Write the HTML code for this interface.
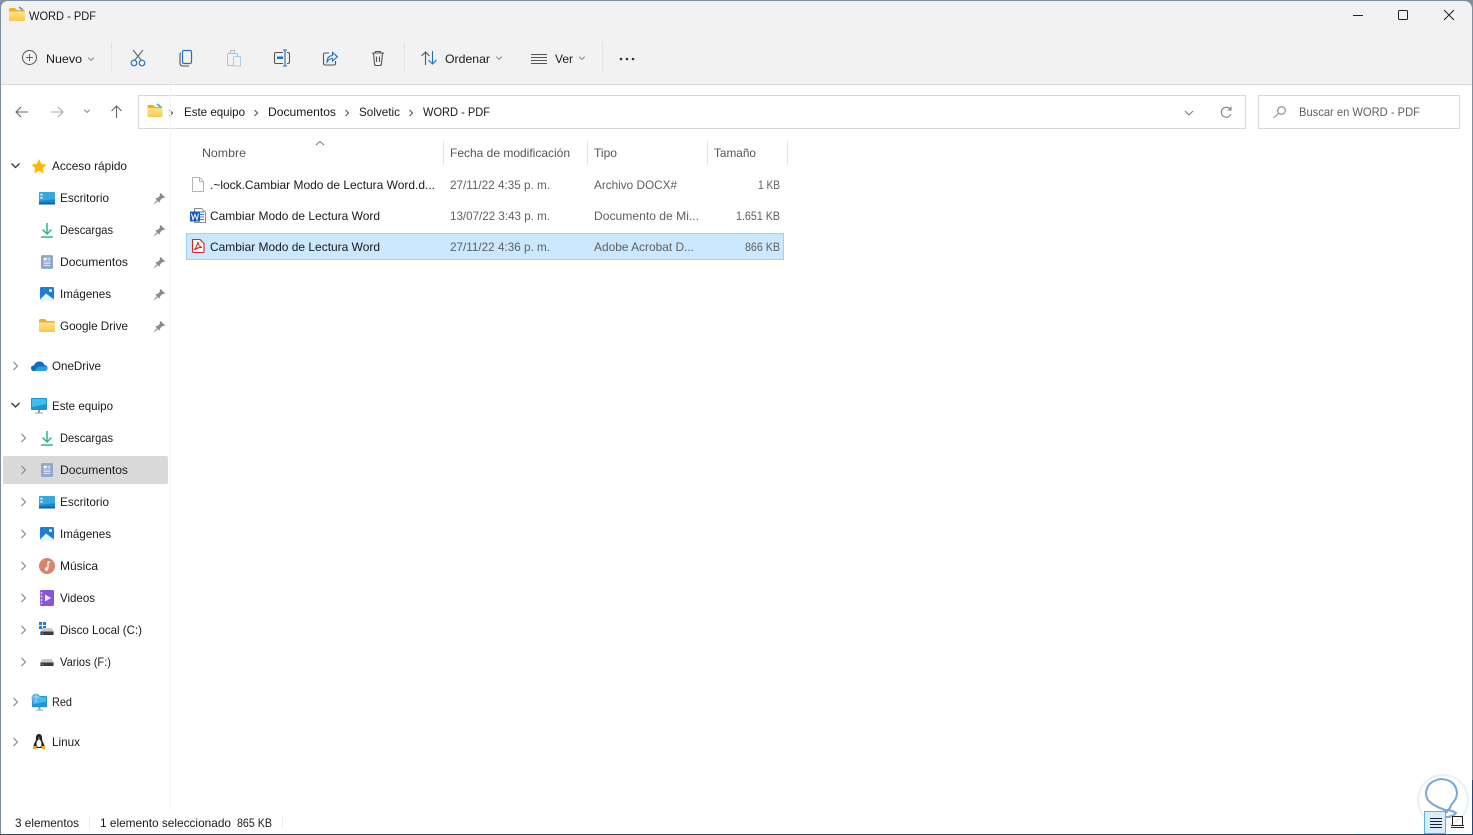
<!DOCTYPE html>
<html lang="es"><head><meta charset="utf-8"><title>WORD - PDF</title>
<style>html,body{margin:0;padding:0;background:#fff;overflow:hidden}svg{display:block}text{font-family:"Liberation Sans",sans-serif;font-size:12px;fill:#1a1a1a}.g{fill:#5f5f5f}.h{fill:#555}</style></head>
<body>
<svg width="1473" height="835" viewBox="0 0 1473 835" xmlns="http://www.w3.org/2000/svg">
<defs>
<linearGradient id="fy" x1="0" y1="0" x2="0" y2="1"><stop offset="0" stop-color="#fde48a"/><stop offset="1" stop-color="#f8c94c"/></linearGradient>
<symbol id="folder" viewBox="0 0 16 14" overflow="visible"><path d="M0 2.500Q0 1 1.500 1H6L8 3H14.500Q16 3 16 4.500V12.500Q16 14 14.500 14H1.500Q0 14 0 12.500Z" fill="#eeb02a"/><path d="M0 4.500H16V12.500Q16 14 14.500 14H1.500Q0 14 0 12.500Z" fill="url(#fy)"/></symbol>
<symbol id="desk" viewBox="0 0 16 14" preserveAspectRatio="none"><rect width="16" height="14" rx="1.500" fill="#1e88c9"/><path d="M0 1.500Q0 0 1.500 0H14.500Q16 0 16 1.500V8L0 10Z" fill="#35a8de"/><rect y="12" width="16" height="2" fill="#0f5f9e"/><rect x="1.500" y="2" width="2" height="2" fill="#e8f6ff"/><rect x="1.500" y="5.500" width="2" height="2" fill="#e8f6ff"/></symbol>
<symbol id="dl" viewBox="0 0 16 16"><path d="M8 1V12M3.500 7.500 8 12l4.500-4.500" fill="none" stroke="#2fb68e" stroke-width="1.500"/><path d="M2 15H14" stroke="#2fb68e" stroke-width="1.500"/></symbol>
<symbol id="doc" viewBox="0 0 14 16"><rect width="14" height="16" rx="1.500" fill="#8fa5ca"/><rect x="3" y="3" width="4" height="3" fill="#eef2f9"/><path d="M8 3.500H11M8 5.500H11M3 8H11M3 10H11M3 12H11" stroke="#eef2f9" stroke-width="1"/></symbol>
<symbol id="img" viewBox="0 0 14 14"><rect width="14" height="14" rx="1.500" fill="#1a7fd4"/><path d="M0 12.500 6 6.500 14 12.500V14H0Z" fill="#eaf6ff"/><circle cx="10.500" cy="3.500" r="1.500" fill="#fff"/></symbol>
<symbol id="pin" viewBox="0 0 10 10"><path d="M6 0 10 4 8.800 4.800 7.500 4.600 5.600 6.600 5.500 8 4.800 8.600 1.400 5.200 2 4.500 3.400 4.400 5.400 2.500 5.200 1.200Z" fill="#8a8a8a"/><path d="M3 7 .5 9.500" stroke="#8a8a8a" stroke-width="1"/></symbol>
<symbol id="pc" viewBox="0 0 16 16"><rect width="16" height="12" rx="1" fill="#1e94d2"/><path d="M1 1H15V6L1 9Z" fill="#3cc0e8"/><rect x="7" y="12" width="2" height="2.500" fill="#7a97a8"/><rect x="4" y="14.500" width="8" height="1.200" fill="#9fb2bf"/></symbol>
<symbol id="drive" viewBox="0 0 15 8"><path d="M2 0H13L15 4V7.500H0V4Z" fill="#c9c9c9"/><rect y="4" width="15" height="4" fill="#3d3d3d"/><rect x="2" y="5.500" width="1.500" height="1" fill="#7fd37f"/></symbol>
<path id="cR" d="M-2-4 2 0-2 4" fill="none" stroke="#8a8a8a" stroke-width="1.200"/>
<path id="cD" d="M-4-2 0 2 4-2" fill="none" stroke="#333" stroke-width="1.300"/>
<path id="cS" d="M-2.800-1.400 0 1.400 2.800-1.400" fill="none" stroke="#8a8a8a" stroke-width="1"/>
<path id="bc" d="M-1.500-3 1.500 0-1.500 3" fill="none" stroke="#555" stroke-width="1.100"/>
</defs>

<!-- window frame -->
<rect width="1473" height="835" fill="#7b90a3"/>
<path d="M1 9Q1 1 9 1H1463Q1472 1 1472 10V834H1Z" fill="#fff"/>
<path d="M1 9Q1 1 9 1H1463Q1472 1 1472 10V84H1Z" fill="#f2f2f2"/>
<rect x="1" y="84" width="1471" height="1" fill="#dcdcdc"/>
<rect x="0" y="834" width="1473" height="1" fill="#3d4a58"/>
<rect x="1355" y="834" width="118" height="1" fill="#24477d"/>
<rect x="1472" y="780" width="1" height="55" fill="#24477d"/>

<!-- title -->
<use href="#folder" x="9" y="7" width="16" height="14"/>
<path d="M19 7l4 3" stroke="#3a9be0" stroke-width="1.500"/>
<text x="29" y="20" textLength="67" lengthAdjust="spacingAndGlyphs">WORD - PDF</text>
<path d="M1353 15.500H1363" stroke="#222" stroke-width="1"/>
<rect x="1398.500" y="10.500" width="9" height="9" rx="1" fill="none" stroke="#222"/>
<path d="M1444 10 1454 20M1454 10 1444 20" stroke="#222" stroke-width="1"/>

<!-- toolbar -->
<circle cx="29.500" cy="57.500" r="7" fill="none" stroke="#555" stroke-width="1"/>
<path d="M29.500 54V61M26 57.500H33" stroke="#1a73c8" stroke-width="1"/>
<text x="46" y="63" textLength="36" lengthAdjust="spacingAndGlyphs">Nuevo</text>
<use href="#cS" x="91" y="59"/>
<g fill="none">
<path d="M133 50 141.500 60.500M143 50 134.500 60.500" stroke="#666" stroke-width="1.100"/>
<circle cx="134" cy="63" r="2.800" stroke="#1a73c8" stroke-width="1.200"/><circle cx="142" cy="63" r="2.800" stroke="#1a73c8" stroke-width="1.200"/>
<rect x="182.500" y="50.500" width="9" height="13" rx="1.500" stroke="#1a73c8" stroke-width="1.200"/>
<path d="M181 53Q180 53 180 55V63Q180 66 183 66H189" stroke="#555" stroke-width="1.100"/>
<rect x="227.500" y="53.500" width="10" height="12" rx="1" stroke="#bdbdbd"/><rect x="230.500" y="50.500" width="4" height="3" stroke="#bdbdbd"/>
<rect x="233.500" y="56.500" width="7" height="9.500" rx="1" stroke="#a9cdea" fill="#f2f2f2"/>
<path d="M283 52.500H276Q274.500 52.500 274.500 54V62Q274.500 63.500 276 63.500H283M287 52.500H288Q289.500 52.500 289.500 54V62Q289.500 63.500 288 63.500H287" stroke="#555" stroke-width="1.100"/>
<path d="M285 50V66M283 50H287M283 66H287" stroke="#1a73c8" stroke-width="1.100"/><rect x="277" y="56.500" width="6" height="2.500" fill="#1a73c8"/>
<path d="M329 53H325Q323.500 53 323.500 54.500V63.500Q323.500 65 325 65H334Q335.500 65 335.500 63.500V61" stroke="#555" stroke-width="1.100"/>
<path d="M327 62Q327 56 332.500 55.500V52.500L337.500 56.800 332.500 61V58.500Q329 58.500 327 62Z" stroke="#1a73c8" stroke-width="1.100"/>
<path d="M372 53H384M375.500 53V51.500H380.500V53M373.500 53 374.500 64Q374.700 65.500 376 65.500H380Q381.300 65.500 381.500 64L382.500 53M376.500 56.500V62M379.500 56.500V62" stroke="#555" stroke-width="1.100"/>
<path d="M425.500 65V52M421.500 56 425.500 52 429.500 56" stroke="#555" stroke-width="1.100"/>
<path d="M432.500 51V64M428.500 60 432.500 64 436.500 60" stroke="#1a73c8" stroke-width="1.100"/>
<path d="M531 54.500H547M531 57.500H547M531 60.500H547M531 63.500H547" stroke="#555" stroke-width="1"/>
</g>
<text x="445" y="63" textLength="45" lengthAdjust="spacingAndGlyphs">Ordenar</text>
<use href="#cS" x="499" y="58"/>
<text x="555" y="63" textLength="18" lengthAdjust="spacingAndGlyphs">Ver</text>
<use href="#cS" x="582" y="58"/>
<circle cx="621" cy="59" r="1.300" fill="#333"/><circle cx="627" cy="59" r="1.300" fill="#333"/><circle cx="633" cy="59" r="1.300" fill="#333"/>
<path d="M111.500 42V73M404.500 42V73M602.500 42V73" stroke="#e3e3e3"/>

<!-- nav buttons -->
<path d="M28 112H16M21 107 16 112 21 117" fill="none" stroke="#666" stroke-width="1.100"/>
<path d="M51 112H63M58 107 63 112 58 117" fill="none" stroke="#aaa" stroke-width="1.100"/>
<use href="#cS" x="87" y="111"/>
<path d="M116.500 118V106M111.500 111 116.500 106 121.500 111" fill="none" stroke="#666" stroke-width="1.100"/>

<!-- address -->
<rect x="138.500" y="95.500" width="1107" height="33" fill="#fff" stroke="#d9d9d9"/>
<use href="#folder" x="147" y="104" width="16" height="13"/>
<path d="M157 104l4 3" stroke="#3a9be0" stroke-width="1.500"/>
<use href="#bc" x="171" y="113"/>
<text x="184" y="116" textLength="61" lengthAdjust="spacingAndGlyphs">Este equipo</text>
<use href="#bc" x="256" y="113"/>
<text x="268" y="116" textLength="68" lengthAdjust="spacingAndGlyphs">Documentos</text>
<use href="#bc" x="347" y="113"/>
<text x="359" y="116" textLength="41" lengthAdjust="spacingAndGlyphs">Solvetic</text>
<use href="#bc" x="411" y="113"/>
<text x="423" y="116" textLength="67" lengthAdjust="spacingAndGlyphs">WORD - PDF</text>
<path d="M1185 111 1189 115 1193 111" fill="none" stroke="#777"/>
<path d="M1230.500 109.500A5 5 0 1 0 1231 114M1231 106.500V110H1227.500" fill="none" stroke="#777" stroke-width="1"/>

<!-- search -->
<rect x="1258.500" y="95.500" width="201" height="33" fill="#fff" stroke="#d9d9d9"/>
<circle cx="1281.500" cy="110.500" r="3.800" fill="none" stroke="#777"/><path d="M1278.500 113.500 1273.500 118" stroke="#c49a8a" stroke-width="1.200"/>
<text x="1299" y="116" textLength="121" lengthAdjust="spacingAndGlyphs" class="g">Buscar en WORD - PDF</text>

<!-- sidebar -->
<rect x="170" y="85" width="1" height="725" fill="#f3f3f3"/>
<rect x="3" y="456" width="165" height="28" rx="2" fill="#d9d9d9"/>

<use href="#cD" x="15.500" y="165.500"/>
<path d="M39 159 41.300 164 46.500 164.600 42.700 168.200 43.800 173.500 39 170.800 34.200 173.500 35.300 168.200 31.500 164.600 36.700 164Z" fill="#fdb900"/>
<text x="52" y="170" textLength="75" lengthAdjust="spacingAndGlyphs">Acceso rápido</text>
<use href="#desk" x="39" y="192" width="16" height="12.500"/><text x="60" y="202" textLength="49" lengthAdjust="spacingAndGlyphs">Escritorio</text><use href="#pin" x="154" y="193" width="11" height="11"/>
<use href="#dl" x="39" y="222" width="16" height="16"/><text x="60" y="234" textLength="53" lengthAdjust="spacingAndGlyphs">Descargas</text><use href="#pin" x="154" y="225" width="11" height="11"/>
<use href="#doc" x="41" y="254" width="12" height="16"/><text x="60" y="266" textLength="68" lengthAdjust="spacingAndGlyphs">Documentos</text><use href="#pin" x="154" y="257" width="11" height="11"/>
<use href="#img" x="40" y="287" width="14" height="14"/><text x="60" y="298" textLength="51" lengthAdjust="spacingAndGlyphs">Imágenes</text><use href="#pin" x="154" y="289" width="11" height="11"/>
<use href="#folder" x="39" y="318" width="16" height="14"/><text x="60" y="330" textLength="68" lengthAdjust="spacingAndGlyphs">Google Drive</text><use href="#pin" x="154" y="321" width="11" height="11"/>

<use href="#cR" x="15.500" y="366"/>
<path d="M34 371Q31 371 31 368Q31 365.500 34 365.500Q35.500 361 40 361.500Q43.500 362 44.500 365Q47.500 365.500 47.500 368Q47.500 371 44.500 371Z" fill="#0f6cbd"/>
<path d="M35 371Q36 366.500 41 366.500Q47.500 365.500 47.500 368Q47.500 371 44.500 371Z" fill="#2a9fe0"/>
<text x="52" y="370" textLength="49" lengthAdjust="spacingAndGlyphs">OneDrive</text>

<use href="#cD" x="15.500" y="405"/>
<use href="#pc" x="31" y="398" width="16" height="16"/>
<text x="52" y="410" textLength="61" lengthAdjust="spacingAndGlyphs">Este equipo</text>

<use href="#cR" x="23.500" y="438"/>
<use href="#dl" x="39" y="430" width="16" height="16"/><text x="60" y="442" textLength="53" lengthAdjust="spacingAndGlyphs">Descargas</text>
<use href="#cR" x="23.500" y="470"/>
<use href="#doc" x="41" y="462" width="12" height="16"/><text x="60" y="474" textLength="68" lengthAdjust="spacingAndGlyphs">Documentos</text>
<use href="#cR" x="23.500" y="502"/>
<use href="#desk" x="39" y="496" width="16" height="12.500"/><text x="60" y="506" textLength="49" lengthAdjust="spacingAndGlyphs">Escritorio</text>
<use href="#cR" x="23.500" y="534"/>
<use href="#img" x="40" y="527" width="14" height="14"/><text x="60" y="538" textLength="51" lengthAdjust="spacingAndGlyphs">Imágenes</text>
<use href="#cR" x="23.500" y="566"/>
<circle cx="47" cy="566" r="8" fill="#d9826c"/><path d="M48 561.500V568.500" stroke="#fff" stroke-width="1.300"/><path d="M48 561.500 50.500 562.500" stroke="#fff"/><circle cx="46.500" cy="569" r="1.700" fill="#fff"/>
<text x="60" y="570" textLength="38" lengthAdjust="spacingAndGlyphs">Música</text>
<use href="#cR" x="23.500" y="598"/>
<rect x="40" y="590" width="14" height="16" rx="1.500" fill="#8a56d8"/><path d="M45 594.500 51 598 45 601.500Z" fill="#f2eaff"/><path d="M41.500 592V604" stroke="#e0d0ff" stroke-width="1.500" stroke-dasharray="2 1.500"/>
<text x="60" y="602" textLength="35" lengthAdjust="spacingAndGlyphs">Videos</text>
<use href="#cR" x="23.500" y="630"/>
<rect x="39" y="622" width="3" height="3" fill="#1a7fd4"/><rect x="43" y="622" width="3" height="3" fill="#1a7fd4"/><rect x="39" y="626" width="3" height="3" fill="#1a7fd4"/><rect x="43" y="626" width="3" height="3" fill="#1a7fd4"/>
<use href="#drive" x="40" y="628" width="14" height="7"/>
<text x="60" y="634" textLength="82" lengthAdjust="spacingAndGlyphs">Disco Local (C:)</text>
<use href="#cR" x="23.500" y="662"/>
<use href="#drive" x="40" y="659" width="14" height="7"/>
<text x="60" y="666" textLength="51" lengthAdjust="spacingAndGlyphs">Varios (F:)</text>

<use href="#cR" x="15.500" y="702"/>
<use href="#pc" x="32" y="696" width="15" height="15"/><circle cx="36" cy="698" r="4.500" fill="#5fb0e8"/><path d="M33 697H39M36 694V702" stroke="#bde0f7" stroke-width=".8"/>
<text x="52" y="706" textLength="20" lengthAdjust="spacingAndGlyphs">Red</text>

<use href="#cR" x="15.500" y="742"/>
<path d="M39 734Q36 734 36 738Q36 741 34.500 743Q33 746 34 748H44Q45 746 43.500 743Q42 741 42 738Q42 734 39 734Z" fill="#222"/>
<path d="M39 739Q36.500 741 36.500 744Q36.500 747 39 747Q41.500 747 41.500 744Q41.500 741 39 739Z" fill="#fff"/>
<path d="M33 746H37L36 749H33ZM41 746H45V749H42Z" fill="#f0a81e"/><path d="M38 737.500H40L39 739Z" fill="#f0a81e"/>
<text x="52" y="746" textLength="28" lengthAdjust="spacingAndGlyphs">Linux</text>

<!-- column headers -->
<path d="M316 145 320 141.500 324 145" fill="none" stroke="#777"/>
<text x="202" y="157" textLength="44" lengthAdjust="spacingAndGlyphs" class="h">Nombre</text>
<text x="450" y="157" textLength="120" lengthAdjust="spacingAndGlyphs" class="h">Fecha de modificación</text>
<text x="594" y="157" textLength="23" lengthAdjust="spacingAndGlyphs" class="h">Tipo</text>
<text x="714" y="157" textLength="42" lengthAdjust="spacingAndGlyphs" class="h">Tamaño</text>
<path d="M443.500 140V165M587.500 140V165M707.500 140V165M787.500 140V165" stroke="#e5e5e5"/>

<!-- rows -->
<rect x="186.500" y="233.500" width="597" height="26" fill="#cce8ff" stroke="#99d1ff"/>

<path d="M192.500 177.500H199.500L203.500 181.500V191.500H192.500Z" fill="#fff" stroke="#b5b5b5"/><path d="M199.500 177.500V181.500H203.500" fill="none" stroke="#b5b5b5"/>
<text x="210" y="189" textLength="225" lengthAdjust="spacingAndGlyphs">.~lock.Cambiar Modo de Lectura Word.d...</text>
<text x="450" y="189" textLength="100" lengthAdjust="spacingAndGlyphs" class="g">27/11/22 4:35 p. m.</text>
<text x="594" y="189" textLength="83" lengthAdjust="spacingAndGlyphs" class="g">Archivo DOCX#</text>
<text x="758" y="189" textLength="22" lengthAdjust="spacingAndGlyphs" class="g">1 KB</text>

<path d="M194.500 208.500H201.500L205.500 212.500V222.500H194.500Z" fill="#fff" stroke="#8c8c8c"/>
<path d="M200 212H204M200 214.500H204M200 217H204M200 219.500H204" stroke="#2b7cd3"/>
<rect x="190" y="211.500" width="10" height="10" fill="#185abd"/>
<path d="M191.500 213.500 193 219.500 195 214.500 197 219.500 198.500 213.500" fill="none" stroke="#fff" stroke-width="1"/>
<text x="210" y="220" textLength="170" lengthAdjust="spacingAndGlyphs">Cambiar Modo de Lectura Word</text>
<text x="450" y="220" textLength="100" lengthAdjust="spacingAndGlyphs" class="g">13/07/22 3:43 p. m.</text>
<text x="594" y="220" textLength="105" lengthAdjust="spacingAndGlyphs" class="g">Documento de Mi...</text>
<text x="736" y="220" textLength="44" lengthAdjust="spacingAndGlyphs" class="g">1.651 KB</text>

<path d="M192.500 239.500H200L204 243.500V251.500Q204 252.500 203 252.500H193.500Q192.500 252.500 192.500 251.500Z" fill="#fff" stroke="#e0201b" stroke-width="1.100"/>
<path d="M198 242Q197 246 194.500 250Q198 247 202 247.500Q198.500 246.500 198 242Z" fill="none" stroke="#e0201b" stroke-width="1.100"/>
<text x="210" y="251" textLength="170" lengthAdjust="spacingAndGlyphs">Cambiar Modo de Lectura Word</text>
<text x="450" y="251" textLength="100" lengthAdjust="spacingAndGlyphs" class="g">27/11/22 4:36 p. m.</text>
<text x="594" y="251" textLength="100" lengthAdjust="spacingAndGlyphs" class="g">Adobe Acrobat D...</text>
<text x="745" y="251" textLength="35" lengthAdjust="spacingAndGlyphs" class="g">866 KB</text>

<!-- status bar -->
<text x="15" y="827" textLength="64" lengthAdjust="spacingAndGlyphs" fill="#333">3 elementos</text>
<path d="M89.500 817V829M282.500 817V829" stroke="#ececec"/>
<text x="100" y="827" textLength="131" lengthAdjust="spacingAndGlyphs">1 elemento seleccionado</text>
<text x="237" y="827" textLength="35" lengthAdjust="spacingAndGlyphs">865 KB</text>

<!-- watermark -->
<circle cx="1443" cy="800" r="25" fill="#fff" stroke="#e9f0f8" stroke-width="2"/>
<path d="M1446 813Q1451 807 1451 805Q1457 799 1457 793Q1456 780 1441 779Q1427 781 1426 793Q1426 799 1430 802Q1434 806 1445 810Q1452 810 1456 813Q1453 817 1446 817" fill="none" stroke="#7ba5d6" stroke-width="2"/>

<!-- view buttons -->
<rect x="1424.500" y="811.500" width="21" height="22" fill="#d9ecfa" stroke="#56b4e6"/>
<path d="M1430 818.500H1442M1430 821.500H1442M1430 824.500H1442M1430 827.500H1442" stroke="#222" stroke-width="1"/>
<path d="M1452.500 825V816.500H1462.500V825" fill="none" stroke="#222" stroke-width="1"/>
<path d="M1451 825.500H1464M1451 827.500H1464" stroke="#222" stroke-width="1"/>
</svg>
</body></html>
